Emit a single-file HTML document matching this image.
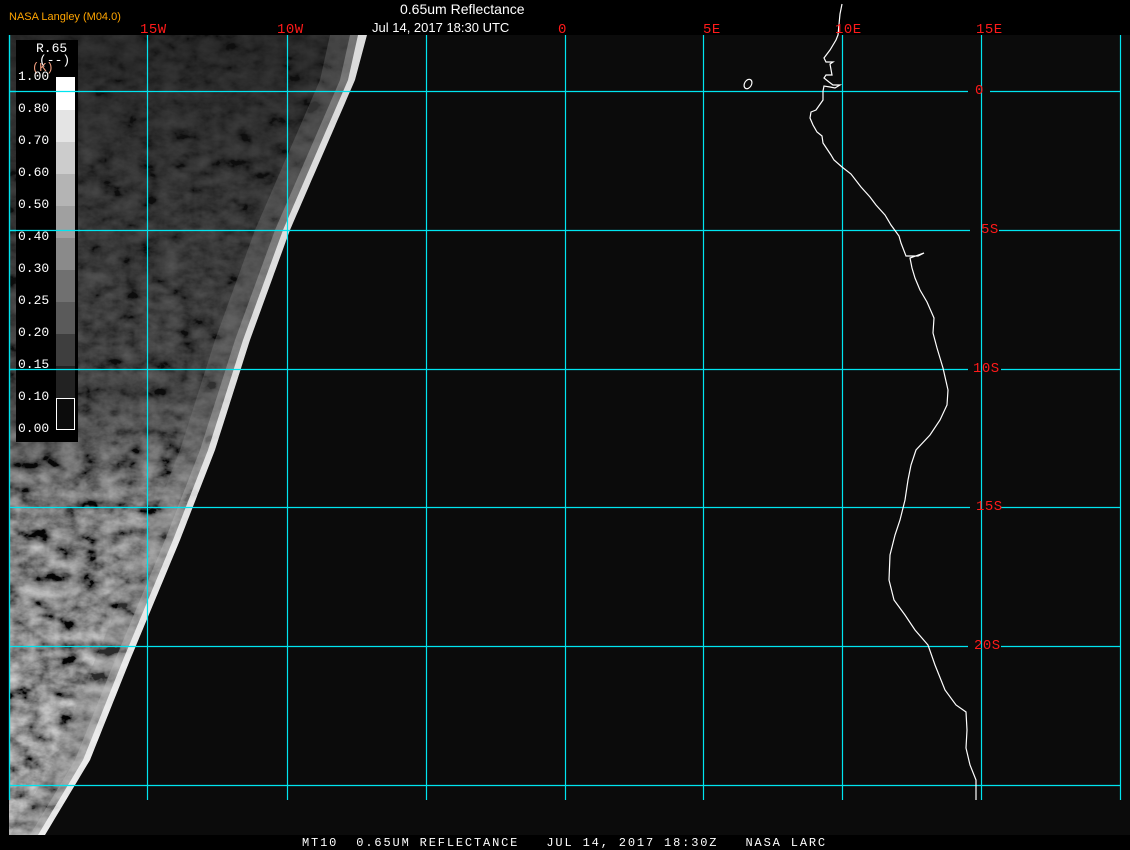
<!DOCTYPE html>
<html><head><meta charset="utf-8"><style>
html,body{margin:0;padding:0;background:#000;width:1130px;height:850px;overflow:hidden;position:relative;font-family:"Liberation Sans",sans-serif}
.t{position:absolute;white-space:pre}
.red{color:#ff1a1a;font-family:"Liberation Mono",monospace;font-size:14px;letter-spacing:0.5px}
.lg{font-family:"Liberation Mono",monospace;font-size:13px;color:#fff}
</style></head><body>
<svg width="1130" height="850" style="position:absolute;left:0;top:0">
<defs>
<clipPath id="sw"><polygon points="9,35 367,35 355,80 290,230 250,340 215,450 180,540 130,660 90,760 45,835 9,835"/></clipPath>
<filter id="tx" x="0" y="0" width="100%" height="100%">
<feTurbulence type="fractalNoise" baseFrequency="0.05 0.07" numOctaves="4" seed="3" result="n"/>
<feColorMatrix in="n" type="matrix" values="0.9 0.9 0 0 -0.55  0.9 0.9 0 0 -0.55  0.9 0.9 0 0 -0.55  0 0 0 0 1"/>
</filter>
<linearGradient id="vert" x1="0" y1="0" x2="0" y2="1">
<stop offset="0" stop-color="#111" stop-opacity="0.85"/>
<stop offset="0.45" stop-color="#111" stop-opacity="0.65"/>
<stop offset="0.6" stop-color="#111" stop-opacity="0.25"/>
<stop offset="1" stop-color="#111" stop-opacity="0.05"/>
</linearGradient>
</defs>
<rect x="0" y="35" width="1130" height="800" fill="#0b0b0b"/>
<rect x="0" y="0" width="9" height="850" fill="#000"/>
<g clip-path="url(#sw)">
<rect x="9" y="35" width="360" height="800" fill="#404040"/>
<rect x="9" y="35" width="360" height="800" filter="url(#tx)"/>
<rect x="9" y="35" width="360" height="800" fill="url(#vert)"/>
<polygon points="367,35 355,80 290,230 250,340 215,450 180,540 130,660 90,760 45,835 10,835 55,760 95,660 145,540 180,450 215,340 255,230 320,80 330,35" fill="#888" opacity="0.3"/>
<polygon points="367,35 355,80 290,230 250,340 215,450 180,540 130,660 90,760 45,835 30,835 75,760 115,660 165,540 200,450 235,340 275,230 340,80 350,35" fill="#bbb" opacity="0.4"/>
<polygon points="367,35 355,80 290,230 250,340 215,450 180,540 130,660 90,760 45,835 38,835 83,760 123,660 173,540 208,450 243,340 283,230 348,80 358,35" fill="#fff" opacity="0.75"/>
</g>
<rect x="0" y="835" width="1130" height="15" fill="#000"/>
<g stroke="#00e5f0" stroke-width="1.2" fill="none">
<line x1="9.5" y1="35" x2="9.5" y2="800"/>
<line x1="147.5" y1="35" x2="147.5" y2="800"/>
<line x1="287.5" y1="35" x2="287.5" y2="800"/>
<line x1="426.5" y1="35" x2="426.5" y2="800"/>
<line x1="565.5" y1="35" x2="565.5" y2="800"/>
<line x1="703.5" y1="35" x2="703.5" y2="800"/>
<line x1="842.5" y1="35" x2="842.5" y2="800"/>
<line x1="981.5" y1="35" x2="981.5" y2="800"/>
<line x1="1120.5" y1="35" x2="1120.5" y2="800"/>
<line x1="9" y1="91.5" x2="968" y2="91.5"/><line x1="990" y1="91.5" x2="1120" y2="91.5"/>
<line x1="9" y1="230.5" x2="970" y2="230.5"/><line x1="999" y1="230.5" x2="1120" y2="230.5"/>
<line x1="9" y1="369.5" x2="968" y2="369.5"/><line x1="1001" y1="369.5" x2="1120" y2="369.5"/>
<line x1="9" y1="507.5" x2="970" y2="507.5"/><line x1="1001" y1="507.5" x2="1120" y2="507.5"/>
<line x1="9" y1="646.5" x2="968" y2="646.5"/><line x1="1001" y1="646.5" x2="1120" y2="646.5"/>
<line x1="9" y1="785.5" x2="1120" y2="785.5"/>
</g>
<g stroke="#fff" stroke-width="1.2" fill="none">
<polyline points="842,4 840,14 838,35 836,40 830,50 824,58 826,62 833,62 830,64 832,75 826,75 824,78 829,82 833,85 840,85 835,88 830,87 824,86 823,91 823,100 816,110 811,112 810,118 813,125 817,132 822,136 823,143 827,149 831,155 834,160 842,167 851,174 861,187 870,197 876,205 885,215 891,225 899,236 901,243 906,256 918,256 924,253 910,258 912,268 915,278 920,290 927,302 934,318 933,333 937,348 943,368 948,390 947,405 940,420 930,435 916,450 911,465 908,480 905,500 900,520 895,535 890,555 889,580 894,600 905,615 915,630 928,645 935,665 945,690 956,705 966,712 967,730 966,748 970,765 976,780 976,800"/>
<ellipse cx="748" cy="84" rx="3.5" ry="5" transform="rotate(30 748 84)"/>
</g>
<rect x="16" y="40" width="62" height="402" fill="#000"/>
<rect x="56" y="77" width="19" height="33" fill="#fff"/>
<rect x="56" y="110" width="19" height="32" fill="#e4e4e4"/>
<rect x="56" y="142" width="19" height="32" fill="#cccccc"/>
<rect x="56" y="174" width="19" height="32" fill="#b4b4b4"/>
<rect x="56" y="206" width="19" height="32" fill="#a0a0a0"/>
<rect x="56" y="238" width="19" height="32" fill="#8a8a8a"/>
<rect x="56" y="270" width="19" height="32" fill="#707070"/>
<rect x="56" y="302" width="19" height="32" fill="#5a5a5a"/>
<rect x="56" y="334" width="19" height="32" fill="#3e3e3e"/>
<rect x="56" y="366" width="19" height="32" fill="#222"/>
<rect x="56.5" y="398.5" width="18" height="31" fill="#0c0c0c" stroke="#fff"/>
<line x1="9.5" y1="35" x2="9.5" y2="800" stroke="#00e5f0" stroke-width="1.2"/>
<line x1="9" y1="91.5" x2="80" y2="91.5" stroke="#00e5f0" stroke-width="1.2"/>
<line x1="9" y1="230.5" x2="80" y2="230.5" stroke="#00e5f0" stroke-width="1.2"/>
<line x1="9" y1="369.5" x2="80" y2="369.5" stroke="#00e5f0" stroke-width="1.2"/>
</svg>
<div class="t" style="left:9px;top:11px;font-size:11px;color:#ffa500">NASA Langley (M04.0)</div>
<div class="t" style="left:400px;top:1px;font-size:14px;color:#fff">0.65um Reflectance</div>
<div class="t" style="left:372px;top:20px;font-size:13px;color:#fff">Jul 14, 2017 18:30 UTC</div>
<div class="t red" style="left:140px;top:22px">15W</div>
<div class="t red" style="left:277px;top:22px">10W</div>
<div class="t red" style="left:558px;top:22px">0</div>
<div class="t red" style="left:703px;top:22px">5E</div>
<div class="t red" style="left:835px;top:22px">10E</div>
<div class="t red" style="left:976px;top:22px">15E</div>
<div class="t red" style="left:975px;top:83px">0</div>
<div class="t red" style="left:981px;top:222px">5S</div>
<div class="t red" style="left:973px;top:361px">10S</div>
<div class="t red" style="left:976px;top:499px">15S</div>
<div class="t red" style="left:974px;top:638px">20S</div>
<div class="t lg" style="left:36px;top:41px">R.65</div>
<div class="t lg" style="left:39px;top:53px">(--)</div>
<div class="t lg" style="left:32px;top:61px;color:#f4a080;font-size:12px">(K)</div>
<div class="t lg" style="left:18px;top:69px">1.00</div>
<div class="t lg" style="left:18px;top:101px">0.80</div>
<div class="t lg" style="left:18px;top:133px">0.70</div>
<div class="t lg" style="left:18px;top:165px">0.60</div>
<div class="t lg" style="left:18px;top:197px">0.50</div>
<div class="t lg" style="left:18px;top:229px">0.40</div>
<div class="t lg" style="left:18px;top:261px">0.30</div>
<div class="t lg" style="left:18px;top:293px">0.25</div>
<div class="t lg" style="left:18px;top:325px">0.20</div>
<div class="t lg" style="left:18px;top:357px">0.15</div>
<div class="t lg" style="left:18px;top:389px">0.10</div>
<div class="t lg" style="left:18px;top:421px">0.00</div>
<div class="t" style="left:302px;top:836px;font-family:'Liberation Mono',monospace;font-size:12px;letter-spacing:1.85px;color:#fff">MT10  0.65UM REFLECTANCE   JUL 14, 2017 18:30Z   NASA LARC</div>
</body></html>
